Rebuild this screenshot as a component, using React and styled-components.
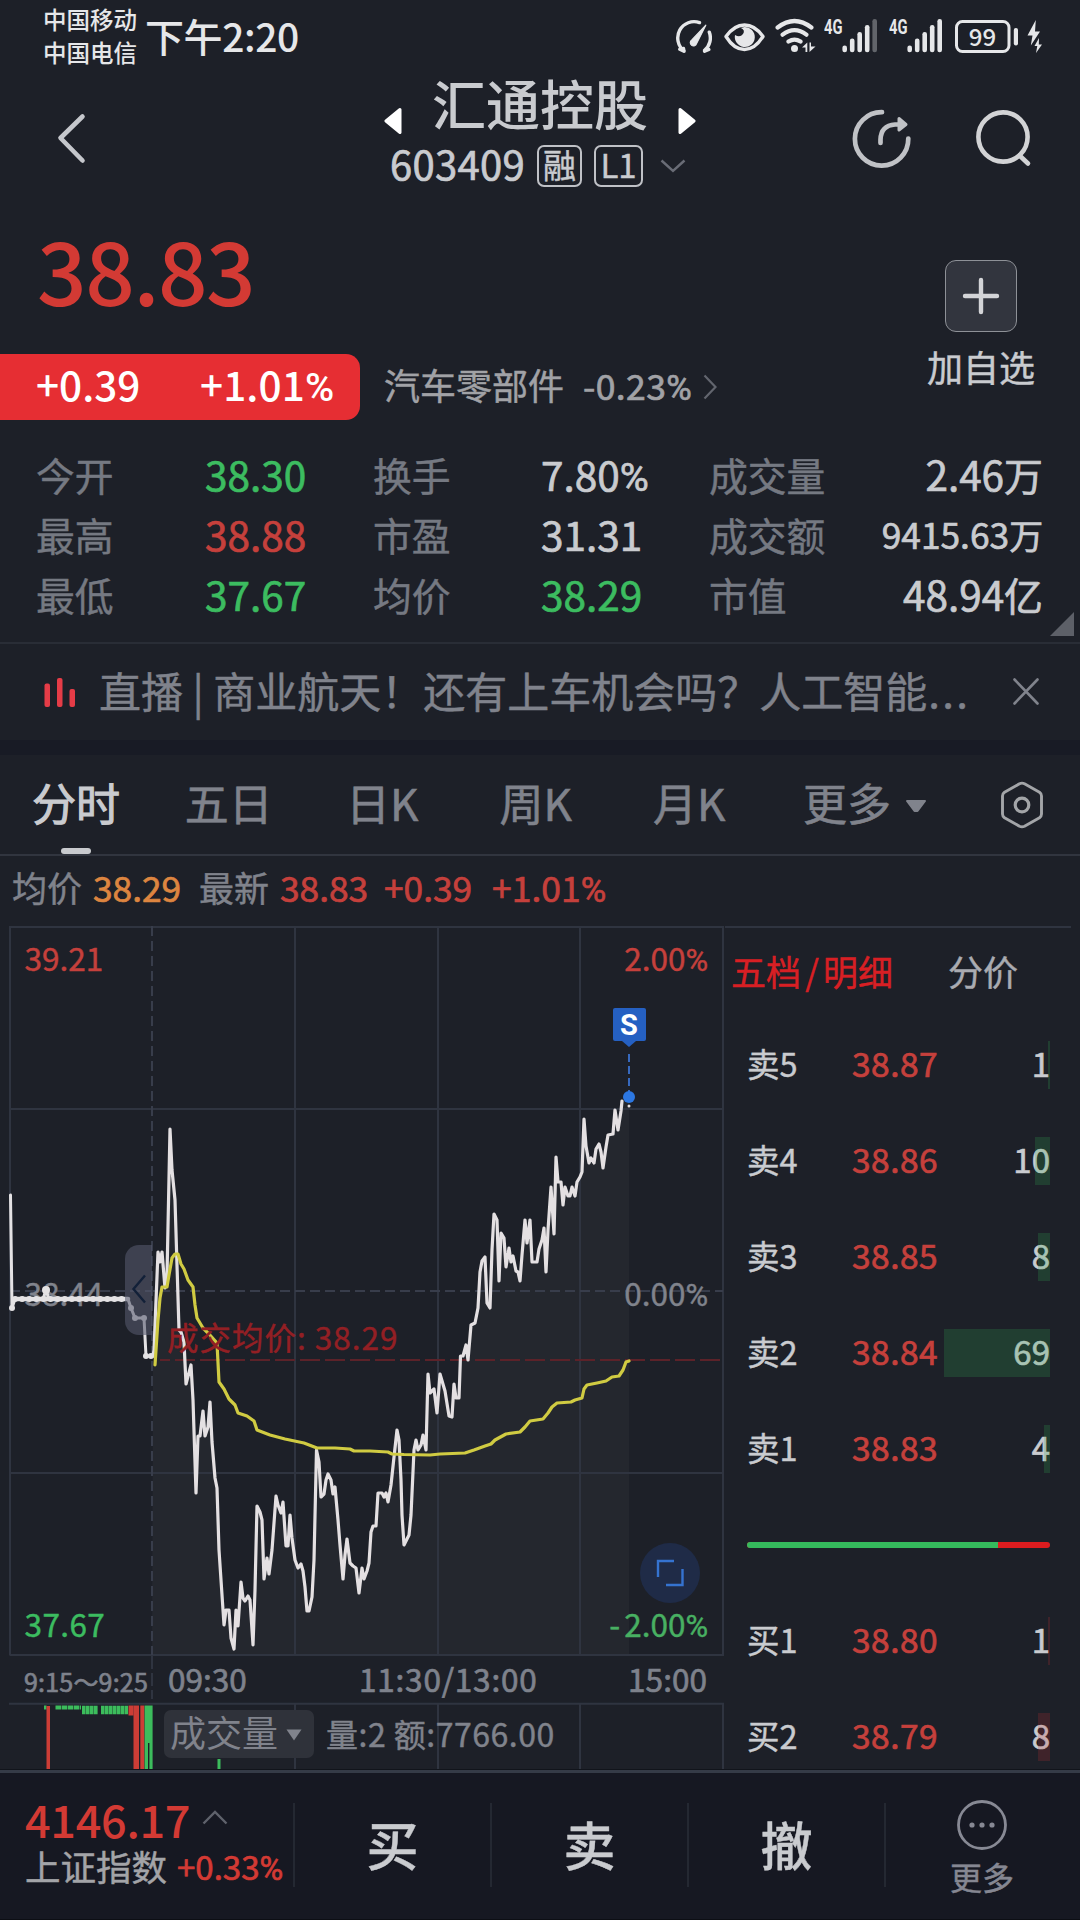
import React from "react";
import styled, { createGlobalStyle } from "styled-components";

const c = {
  bg: "#1d2028",
  band: "#181b25",
  text: "#c9cbcf",
  sub: "#80838c",
  label: "#757982",
  red: "#d33a34",
  redSoft: "#c5403c",
  green: "#3cbc60",
  line: "#2f3440",
};

const Global = createGlobalStyle`
  * { box-sizing: border-box; }
  html, body { margin: 0; padding: 0; background: ${c.bg}; }
  body {
    font-family: "Noto Sans CJK SC", "Noto Sans", sans-serif;
    font-weight: 400;
    color: ${c.text};
    -webkit-text-stroke-width: 0.45px;
  }
  svg { display: block; flex: none; }
`;

const Screen = styled.div`
  width: 1080px;
  height: 1920px;
  overflow: hidden;
  display: flex;
  flex-direction: column;
  background: ${c.bg};
`;

/* ---------- numbers ---------- */

const NumText = styled.span`
  font-size: ${(p) => p.$size}px;
  letter-spacing: ${(p) => p.$ls || 0}px;
  color: ${(p) => p.$color || "inherit"};
  font-weight: ${(p) => p.$weight || 400};
  -webkit-text-stroke-width: ${(p) => (p.$weight ? 0 : 0.7)}px;
  white-space: nowrap;
`;
const Percent = styled.span`
  font-family: Roboto, sans-serif;
  font-size: 0.98em;
`;
const Unit = styled.span`
  font-size: 0.96em;
`;

function Num({ children, size, ls, color, weight }) {
  const parts = String(children).split(/([%万亿])/).filter(Boolean);
  return (
    <NumText $size={size} $ls={ls} $color={color} $weight={weight}>
      {parts.map((s, i) =>
        s === "%" ? <Percent key={i}>%</Percent> : /[万亿]/.test(s) ? <Unit key={i}>{s}</Unit> : s
      )}
    </NumText>
  );
}

/* ---------- status bar ---------- */

const StatusBar = styled.div`
  height: 72px;
  flex: none;
  display: flex;
  padding: 0 37px 0 43px;
  color: #e6e7e9;
  -webkit-text-stroke-width: 0;
`;
const Carriers = styled.div`
  padding-top: 3px;
  font-size: 23.5px;
  line-height: 33px;
  width: 102px;
  white-space: nowrap;
  font-weight: 500;
`;
const Clock = styled.div`
  font-size: 39px;
  line-height: 71px;
  letter-spacing: -0.4px;
  font-weight: 500;
  white-space: nowrap;
`;
const StatusIcons = styled.div`
  margin-left: auto;
  display: flex;
`;
const IconSlot = styled.div`
  margin-left: ${(p) => p.$gap}px;
`;

const ink = "#e6e7e9";

const GaugeIcon = () => (
  <svg width="36" height="72" viewBox="676 0 36 72" fill="none" stroke={ink} strokeWidth="3.4" strokeLinecap="round">
    <path d="M699.5 22.6 A16.300 16.300 0 0 0 684 50.800 M679.800 49.300 L684 51.300 M684 51.300 L683.500 48.500" />
    <path d="M709.300 32.200 A16.300 16.300 0 0 1 704.600 50.400 M708.800 49.500 L704.600 51.300" />
    <path d="M705.8 25.2 L696.6 43.4 A3.2 3.2 0 1 1 691.8 40 Z" fill={ink} strokeWidth="1.2" strokeLinejoin="round" />
  </svg>
);
const EyeIcon = () => (
  <svg width="41" height="72" viewBox="724 0 41 72">
    <path d="M726 36.5 Q734 25 744.5 25 Q755 25 763 36.5 Q755 49.500 744.5 49.500 Q734 49.500 726 36.5Z" fill="none" stroke={ink} strokeWidth="3.4" strokeLinejoin="round" />
    <path d="M744.5 27 A10 10 0 1 1 735 35 Q740 38 743 34 Q745.500 30 741 28 Z" fill={ink} />
  </svg>
);
const WifiIcon = () => (
  <svg width="42" height="72" viewBox="775 0 42 72" fill="none" stroke={ink} strokeWidth="4.2" strokeLinecap="round">
    <path d="M777.600 27.500 Q794.500 14.500 811.400 27.500 M782.600 34.700 Q794.500 25.500 806.400 34.700 M788.500 41.600 Q794.500 37.500 800.500 41.600" />
    <circle cx="794.500" cy="48.500" r="3.500" fill={ink} stroke="none" />
    <path d="M802 47.500 L807.300 42.500 V52 H805.500 V47.500Z M815.500 46.500 L809.500 52 V42.500 H811 V46.500Z" fill={ink} stroke="none" />
  </svg>
);
function SignalIcon({ full }) {
  const tops = [45.5, 38.5, 32, 25, 19];
  return (
    <svg width="54" height="72" viewBox="0 0 54 72">
      <text x="0" y="33.500" fontSize="19.500" fontWeight="700" fontFamily="Roboto, sans-serif" fill={ink} textLength="18.500" lengthAdjust="spacingAndGlyphs">
        4G
      </text>
      {tops.map((t, i) => (
        <rect key={t} x={18.4 + i * 7.5} y={t} width="4.6" height={52.3 - t} rx="2.200" fill={ink} opacity={i === 4 && !full ? 0.35 : 1} />
      ))}
    </svg>
  );
}
const BatteryIcon = () => (
  <svg width="64" height="72" viewBox="955 0 64 72">
    <rect x="956.500" y="21.500" width="52.500" height="30" rx="6" fill="none" stroke={ink} strokeWidth="3" />
    <rect x="1013.800" y="28" width="4.200" height="17.500" rx="2" fill={ink} />
    <text x="982.500" y="45.500" textAnchor="middle" fontSize="24" fontWeight="500" fontFamily="Noto Sans CJK SC, sans-serif" fill={ink}>
      99
    </text>
  </svg>
);
const BoltIcon = () => (
  <svg width="16" height="72" viewBox="1027 0 16 72" fill={ink}>
    <path d="M1035.800 20 L1027.500 35.500 H1032.500 L1030.800 45.500 L1040 31.500 H1035 Z" />
    <path d="M1039 38 L1034.500 46 H1037.300 L1036 53 L1042 44.500 H1038.800 Z" />
  </svg>
);

/* ---------- header ---------- */

const Header = styled.header`
  height: 134px;
  flex: none;
  display: flex;
  align-items: flex-start;
  padding: 0 44px 0 56px;
`;
const TitleBlock = styled.div`
  width: 312px;
  margin-left: 296px;
`;
const TitleRow = styled.div`
  height: 72px;
  display: flex;
  justify-content: space-between;
  align-items: flex-start;
  svg { margin-top: 35px; }
`;
const Title = styled.h1`
  margin: 0;
  font-size: 54px;
  line-height: 62px;
  font-weight: 500;
  white-space: nowrap;
  -webkit-text-stroke-width: 0;
`;
const CodeRow = styled.div`
  height: 43px;
  display: flex;
  align-items: center;
  padding-left: 6px;
  > span { line-height: 43px; margin-top: -5px; width: 147px; flex: none; }
`;
const Badge = styled.div`
  width: ${(p) => p.$w}px;
  flex: none;
  height: 42px;
  border: 2px solid #bfc1c6;
  border-radius: 7px;
  margin-right: ${(p) => p.$gap}px;
  font-size: ${(p) => p.$size}px;
  line-height: 34px;
  text-align: center;
`;
const HeaderIcon = styled.div`
  margin-left: ${(p) => p.$gap}px;
  margin-top: ${(p) => p.$top}px;
`;

/* ---------- quote ---------- */

const Quote = styled.section`
  position: relative;
  height: 436px;
  flex: none;
`;
const QuoteTop = styled.div`
  display: flex;
  height: 214px;
`;
const QuoteMain = styled.div`
  flex: 1;
`;
const Price = styled.div`
  margin: 14px 0 38px 37px;
  height: 96px;
  line-height: 96px;
`;
const ChangeRow = styled.div`
  display: flex;
  height: 66px;
`;
const ChangeBadge = styled.div`
  width: 360px;
  height: 66px;
  padding-left: 36px;
  display: flex;
  border-radius: 0 14px 14px 0;
  background: #e62e33;
  color: #fff;
  line-height: 60px;
  > span:first-child { width: 164px; }
`;
const Sector = styled.div`
  margin-left: 24px;
  display: flex;
  color: #a1a2a6;
  font-size: 36px;
  line-height: 61px;
  svg { margin: 20px 0 0 11px; }
`;
const SectorName = styled.span`
  margin-right: 19px;
`;
const AddBlock = styled.div`
  width: 110px;
  margin-right: 44px;
  display: flex;
  flex-direction: column;
  align-items: center;
`;
const AddButton = styled.div`
  width: 72px;
  height: 72px;
  margin-top: 54px;
  border: 1.5px solid #8e9197;
  border-radius: 11px;
  background: #32353e;
  display: flex;
  align-items: center;
  justify-content: center;
`;
const AddLabel = styled.div`
  margin-top: 14px;
  font-size: 36px;
  line-height: 41px;
  white-space: nowrap;
`;
const Stats = styled.div`
  display: grid;
  grid-template-columns: 169px 168px 168px 168px 334px;
  grid-auto-rows: 60px;
  padding: 24px 0 0 36px;
  line-height: 60px;
`;
const StatLabel = styled.div`
  font-size: 38.8px;
  color: ${c.label};
  white-space: nowrap;
`;
const StatValue = styled.div``;
const StatPair = styled.div`
  display: flex;
  justify-content: space-between;
`;
const Corner = styled.div`
  position: absolute;
  right: 6px;
  bottom: 6px;
  width: 24px;
  height: 24px;
  background: #5d6068;
  clip-path: polygon(100% 0, 100% 100%, 0 100%);
`;

/* ---------- news ---------- */

const News = styled.div`
  height: 98px;
  flex: none;
  border-top: 2px solid #292d36;
  display: flex;
  align-items: flex-start;
  padding-left: 44px;
  color: ${c.sub};
  > svg { margin-top: 34px; }
`;
const NewsText = styled.div`
  margin-left: 23px;
  width: 914px;
  font-size: 42px;
  line-height: 92px;
  white-space: pre;
`;
const Dots = styled.span`
  letter-spacing: 2.400px;
  margin-left: 1px;
`;
const Band = styled.div`
  height: 15px;
  flex: none;
  background: ${c.band};
`;

/* ---------- tabs ---------- */

const Tabs = styled.nav`
  height: 101px;
  flex: none;
  border-bottom: 2px solid #31353f;
  display: flex;
`;
const Tab = styled.div`
  width: ${(p) => (p.$active ? 152 : 153.5)}px;
  display: flex;
  flex-direction: column;
  align-items: center;
  font-size: 44px;
  line-height: 93px;
  height: 99px;
  padding-top: 1px;
  -webkit-text-stroke-width: ${(p) => (p.$active ? 1.1 : 0.6)}px;
  color: ${(p) => (p.$active ? c.text : c.sub)};
`;
const Underline = styled.div`
  width: 30px;
  height: 6px;
  margin-top: -1px;
  border-radius: 3px;
  background: #c8cace;
`;
const MoreTab = styled.div`
  width: 195px;
  padding: 1px 0 0 37px;
  display: flex;
  font-size: 44px;
  line-height: 93px;
  color: ${c.sub};
  -webkit-text-stroke-width: 0.6px;
  svg { margin: 43px 0 0 14px; }
`;
const Settings = styled.div`
  margin: 26px 0 0 39px;
`;

const Info = styled.div`
  height: 70px;
  flex: none;
  display: flex;
  padding-left: 12px;
  font-size: 35px;
  line-height: 61px;
  color: ${c.sub};
`;
const InfoCell = styled.div`
  width: ${(p) => p.$w}px;
  white-space: nowrap;
`;

/* ---------- chart ---------- */

const Main = styled.main`
  height: 843px;
  flex: none;
  display: flex;
`;
const ChartColumn = styled.div`
  width: 725px;
  display: flex;
  flex-direction: column;
`;
const Plot = styled.div`
  position: relative;
  height: 730px;
`;
const Tag = styled.div`
  position: absolute;
  top: ${(p) => p.$top}px;
  ${(p) => (p.$right ? `right: ${p.$right}px;` : `left: ${p.$left}px;`)}
  line-height: 40px;
  font-size: 31.500px;
  letter-spacing: ${(p) => p.$ls || 0}px;
  color: ${(p) => p.$color};
  white-space: nowrap;
`;
const Minus = styled.span`
  margin-right: 4px;
`;
const SellFlag = styled.div`
  position: absolute;
  left: 612.500px;
  top: 82px;
  width: 33px;
  height: 33px;
  border-radius: 2px;
  background: #2560c2;
  color: #fff;
  font: 700 29px/34px Roboto, sans-serif;
  text-align: center;
  -webkit-text-stroke-width: 0;
`;
const TimeAxis = styled.div`
  height: 47px;
  display: flex;
  line-height: 45px;
  color: #7e828c;
  padding-left: 24px;
`;
const TimeCell = styled.div`
  width: ${(p) => p.$w}px;
  white-space: nowrap;
  padding-top: ${(p) => p.$pt || 0}px;
`;
const Volume = styled.div`
  position: relative;
  flex: 1;
`;
const VolumeLegend = styled.div`
  position: absolute;
  left: 164px;
  top: 7px;
  display: flex;
  color: ${c.sub};
`;
const VolumePicker = styled.div`
  width: 150px;
  height: 48px;
  border-radius: 7px;
  background: #2f323a;
  padding-left: 6px;
  display: flex;
  font-size: 36px;
  line-height: 43px;
  -webkit-text-stroke-width: 0;
  svg { margin: 19px 0 0 8px; }
`;
const VolumeText = styled.div`
  margin-left: 12px;
  font-size: 32px;
  letter-spacing: 0.5px;
  line-height: 47px;
  white-space: pre;
`;

const priceLine = [
  [153, 1356], [154, 1350], [158, 1252], [160, 1262], [162, 1252], [165, 1288], [167, 1275], [170, 1129],
  [172, 1170], [175, 1200], [179, 1330], [181, 1332], [184, 1342], [186, 1384], [191, 1365], [193, 1400],
  [196, 1493], [198, 1436], [200, 1436], [203, 1411], [205, 1436], [208, 1427], [210, 1402], [212, 1442],
  [215, 1478], [217, 1488], [219, 1550], [222, 1595], [224, 1625], [226, 1610], [229, 1610], [231, 1638],
  [234, 1649], [236, 1610], [238, 1626], [241, 1582], [243, 1598], [245, 1601], [248, 1596], [250, 1600],
  [253, 1645], [255, 1590], [257, 1506], [260, 1512], [262, 1520], [264, 1579], [267, 1558], [269, 1574],
  [272, 1550], [274, 1523], [276, 1496], [278, 1505], [281, 1513], [283, 1502], [286, 1546], [288, 1546],
  [290, 1515], [292, 1538], [295, 1560], [298, 1568], [301, 1564], [303, 1571], [305, 1587], [307, 1611],
  [309, 1611], [312, 1597], [314, 1560], [316.500, 1450], [319, 1462], [321, 1497], [324, 1494], [326, 1480],
  [328, 1474], [331, 1480], [333, 1494], [335, 1487], [338, 1520], [340, 1545], [343, 1579], [345, 1555],
  [347, 1539], [350, 1563], [353, 1566], [356, 1568], [359, 1593], [362, 1568], [364, 1579], [367, 1571],
  [369, 1563], [371, 1532], [373, 1526], [376, 1526], [378, 1493], [382, 1493], [384, 1497], [386, 1493],
  [388, 1502], [391, 1485], [394, 1457], [397, 1430], [399, 1440], [401, 1480], [402, 1515], [404, 1545],
  [409, 1535], [411, 1515], [414, 1450], [416, 1440], [418, 1450], [421, 1445], [423, 1435], [426, 1450],
  [428, 1374], [430, 1393], [434, 1389], [437, 1413], [440, 1374], [445, 1391], [449, 1416], [452, 1417],
  [454, 1384], [456, 1398], [459, 1398], [460.500, 1356], [463, 1356], [466, 1345], [468, 1360], [471, 1325],
  [475, 1323], [478, 1308], [480, 1272], [482, 1261], [485, 1257], [487, 1303], [490, 1308], [492, 1250],
  [494, 1214], [497, 1220], [499, 1281], [501, 1233], [504, 1238], [506, 1267], [509, 1248], [511, 1262],
  [513, 1256], [516, 1271], [518, 1272], [520, 1281], [522, 1255], [525, 1220], [527, 1243], [530, 1220],
  [532, 1262], [537, 1262], [539, 1249], [542, 1240], [544, 1228], [546, 1272], [548, 1230], [551, 1187],
  [554, 1234], [556, 1157], [558, 1182], [561, 1182], [563, 1205], [565, 1187], [568, 1196], [570, 1196],
  [572, 1187], [575, 1196], [577, 1182], [580, 1177], [582, 1172], [584, 1119], [586, 1146], [589, 1163],
  [591, 1158], [594, 1163], [596, 1149], [599, 1144], [601, 1152], [603, 1168], [606, 1147], [608, 1135],
  [613, 1134], [615, 1110], [618, 1130], [621, 1111], [622, 1101],
];
const avgLine = [
  [155, 1365], [158, 1320], [160, 1298], [162, 1287], [167, 1287], [169, 1275], [172, 1258], [175, 1254],
  [178, 1254], [181, 1264], [184, 1269], [188, 1280], [193, 1287], [195, 1305], [197, 1318], [203, 1328],
  [209, 1334], [217, 1343], [219, 1382], [224, 1389], [229, 1399], [235, 1405], [238, 1413], [247, 1416],
  [254, 1421], [257, 1430], [270, 1435], [285, 1439], [304, 1443], [317, 1448], [335, 1448], [350, 1449],
  [354, 1451], [370, 1451], [388, 1452], [392, 1454], [404, 1454.500], [430, 1455], [440, 1454], [465, 1453],
  [474, 1450], [485, 1446], [491, 1444], [495, 1440], [506, 1434], [520, 1432], [525, 1427], [530, 1421],
  [543, 1419], [548, 1413], [552, 1407], [557, 1403], [571, 1402], [575, 1400], [582, 1398], [584, 1389],
  [587, 1385], [597, 1383], [606, 1381], [612, 1377], [619, 1376], [623, 1370], [626, 1362], [629, 1361],
];
const auctionTail = [[128, 1299], [131, 1308], [135, 1318], [144, 1318], [146, 1356], [153, 1356]];
const toPoints = (pts) => pts.map((p) => p.join(",")).join(" ");

function PriceChart() {
  return (
    <svg width="725" height="730" viewBox="0 926 725 730" fill="none">
      <polygon points={`152,1654 ${toPoints(priceLine)} 629,1101 629,1654`} fill="#fff" fillOpacity="0.032" />
      <g stroke={c.line} strokeWidth="2">
        <path d="M9.500 927 H724 M10 926 V1655 M723 926 V1655 M9.500 1655 H724" />
        <path d="M10 1109 H723 M10 1473 H723 M295 926 V1655 M438 926 V1655 M580 926 V1655" />
      </g>
      <g stroke="#383d4b" strokeWidth="2" strokeDasharray="10 5">
        <path d="M10 1291 H723" />
        <path d="M152 926 V1655" />
      </g>
      <path d="M160 1360 H720" stroke="#5c2229" strokeWidth="1.800" strokeDasharray="20 5" strokeDashoffset="10" />
    </svg>
  );
}

const LineLayer = styled.div`
  position: absolute;
  inset: 0;
`;

function PriceLines() {
  return (
    <svg width="725" height="730" viewBox="0 926 725 730" fill="none" strokeLinejoin="round" strokeLinecap="round">
      <path d="M10.500 1195 L12 1308 L15 1299" stroke="#e4e2e4" strokeWidth="3" />
      <path d="M15 1299 H128" stroke="#e4e2e4" strokeWidth="4.600" />
      <path d="M15 1299 H128" stroke="#e4e2e4" strokeWidth="6" strokeDasharray="0.100 7" />
      <path d="M43 1299 L46 1290 L49 1299" stroke="#e4e2e4" strokeWidth="3" />
      <polyline points={toPoints(auctionTail)} stroke="#e4e2e4" strokeWidth="3" />
      {[[12, 1308], [46, 1290], [131, 1308], [135, 1318], [144, 1318], [146, 1356], [151, 1356]].map(([x, y]) => (
        <circle key={x} cx={x} cy={y} r={x === 46 ? 4 : 3} fill="#e4e2e4" />
      ))}
      <polyline points={toPoints(priceLine)} stroke="#e4e0e2" strokeWidth="3.200" />
      <polyline points={toPoints(avgLine)} stroke="#d0cb42" strokeWidth="3.200" />
      <circle cx="629" cy="1106" r="1.500" fill="#e4e0e2" />
      <path d="M629 1054 V1092" stroke="#3769be" strokeWidth="2" strokeDasharray="8 4" strokeLinecap="butt" />
      <path d="M622 1041 H636 L629 1047 Z" fill="#2560c2" />
      <circle cx="629" cy="1097" r="6" fill="#2c77e2" />
      <path d="M152 1245 H139 A14 14 0 0 0 125 1259 V1321 A14 14 0 0 0 139 1335 H152 Z" fill="#565a6e" fillOpacity="0.58" />
      <path d="M145 1275.500 L133.500 1289 L145 1302.500" stroke="#122038" strokeWidth="2.400" strokeLinecap="butt" strokeLinejoin="miter" />
      <circle cx="670" cy="1573" r="30" fill="#1f2b47" />
      <path d="M658 1577 V1561 H674 M682.500 1569 V1585 H666" stroke="#3573d0" strokeWidth="2.400" strokeLinecap="butt" strokeLinejoin="miter" />
    </svg>
  );
}

function VolumeChart() {
  const r = "#cc3d36";
  const g = "#3cbc5c";
  return (
    <svg width="725" height="113" viewBox="0 1656 725 113" fill="none">
      <g stroke={c.line} strokeWidth="2">
        <path d="M9 1703.700 H724 M295 1704 V1769 M438 1704 V1769 M580 1704 V1769 M723 1704 V1769" />
        <path d="M152 1656 V1699" strokeDasharray="13 4" />
      </g>
      <rect x="44" y="1705.500" width="2.500" height="4" fill={g} />
      <rect x="46.500" y="1706" width="3.500" height="63" fill={r} />
      <path d="M55.500 1707.500 H81" stroke={g} strokeWidth="4" strokeDasharray="5.500 0.600" />
      <path d="M82 1710 H98 M101 1710 H128" stroke={g} strokeWidth="8.500" strokeDasharray="3.600 0.400" />
      <rect x="128.500" y="1705.500" width="5" height="10" fill={r} />
      <rect x="133.500" y="1705.500" width="5.500" height="64" fill={r} />
      <rect x="140.300" y="1705.500" width="4" height="64" fill={r} />
      <rect x="144.600" y="1705.500" width="8" height="64" fill={g} />
      <rect x="148" y="1743" width="1.400" height="26" fill={c.bg} />
      <rect x="217.500" y="1759" width="3" height="10" fill={g} />
    </svg>
  );
}
const VolumeLayer = styled.div`
  position: absolute;
  left: 0;
  top: -47px;
`;

/* ---------- order book ---------- */

const Book = styled.aside`
  width: 346px;
  border-top: 2px solid ${c.line};
  height: 100%;
  overflow: hidden;
`;
const BookTabs = styled.div`
  display: flex;
  height: 88px;
  padding: 0 0 0 6px;
  font-size: 35px;
  line-height: 85px;
  color: #a9abb1;
`;
const BookTab = styled.div`
  width: ${(p) => p.$w}px;
  color: ${(p) => (p.$active ? "#d81f24" : "inherit")};
  white-space: nowrap;
`;
const Slash = styled.span`
  display: inline-block;
  width: 22px;
  text-align: center;
`;
const BookRow = styled.div`
  position: relative;
  height: 96px;
  width: 303px;
  margin-left: 22px;
  display: flex;
  line-height: 93px;
  font-size: 32.500px;
`;
const Side = styled.div`
  width: 105px;
`;
const Qty = styled.div`
  margin-left: auto;
`;
const QtyBar = styled.div`
  position: absolute;
  right: 0;
  top: 25px;
  height: 48px;
  background: ${(p) => (p.$sell ? "rgba(48, 170, 80, 0.22)" : "rgba(200, 50, 50, 0.2)")};
`;
const RatioRow = styled.div`
  height: 96px;
  padding: 46px 0 0 21.500px;
`;
const Ratio = styled.div`
  display: flex;
  width: 303px;
  height: 6px;
  border-radius: 3px;
  overflow: hidden;
  background: #dc1c1f;
`;
const RatioSell = styled.div`
  width: 251px;
  background: #35ba5d;
`;

const sells = [
  ["卖5", "38.87", 1],
  ["卖4", "38.86", 10],
  ["卖3", "38.85", 8],
  ["卖2", "38.84", 69],
  ["卖1", "38.83", 4],
];
const buys = [
  ["买1", "38.80", 1],
  ["买2", "38.79", 8],
];

function Level({ row, sell }) {
  const [name, price, qty] = row;
  return (
    <BookRow>
      <Side>{name}</Side>
      <Num size={33.5} ls={0.5} color={c.redSoft}>{price}</Num>
      <Qty>
        <Num size={33}>{qty}</Num>
      </Qty>
      <QtyBar $sell={sell} style={{ width: Math.max(2, qty * 1.535) }} />
    </BookRow>
  );
}

/* ---------- bottom bar ---------- */

const BottomBar = styled.footer`
  height: 151px;
  flex: none;
  border-top: 1px solid #11141b;
  border-bottom: 1px solid #0c0e14;
  background: #161822;
  box-shadow: inset 0 3px 0 #353b47;
  display: flex;
`;
const IndexBox = styled.div`
  width: 293px;
  padding: 21px 0 0 25px;
  color: ${c.red};
`;
const IndexTop = styled.div`
  display: flex;
  height: 55px;
  line-height: 55px;
  svg { margin: 19px 0 0 12px; }
`;
const IndexBottom = styled.div`
  display: flex;
  height: 40px;
  line-height: 40px;
`;
const IndexName = styled.span`
  font-size: 35.500px;
  color: #a3a4a8;
  margin-right: 10px;
`;
const TradeButton = styled.div`
  width: 197px;
  height: 84px;
  margin-top: 33px;
  border-left: 2px solid #242832;
  text-align: center;
  font-size: 52px;
  line-height: 81px;
  font-weight: 500;
`;
const MoreButton = styled(TradeButton)`
  width: 194px;
  display: flex;
  flex-direction: column;
  align-items: center;
  font-size: 32px;
  line-height: 40px;
  font-weight: 400;
  color: #858792;
  svg { margin-top: -4px; }
`;
const MoreLabel = styled.span`
  margin-top: 5px;
`;

export default function App() {
  return (
    <>
      <Global />
      <Screen>
        <StatusBar>
          <Carriers>
            <div>中国移动</div>
            <div>中国电信</div>
          </Carriers>
          <Clock>下午2:20</Clock>
          <StatusIcons>
            <GaugeIcon />
            <IconSlot $gap={12}><EyeIcon /></IconSlot>
            <IconSlot $gap={10}><WifiIcon /></IconSlot>
            <IconSlot $gap={7}><SignalIcon /></IconSlot>
            <IconSlot $gap={11}><SignalIcon full /></IconSlot>
            <IconSlot $gap={12}><BatteryIcon /></IconSlot>
            <IconSlot $gap={8}><BoltIcon /></IconSlot>
          </StatusIcons>
        </StatusBar>

        <Header>
          <svg width="32" height="134" viewBox="56 72 32 134" fill="none" stroke="#c5c7cc" strokeWidth="4.600" strokeLinecap="round" strokeLinejoin="round">
            <path d="M82.500 116.500 L60.500 138 L82.500 160.500" />
          </svg>
          <TitleBlock>
            <TitleRow>
              <svg width="18" height="28" viewBox="0 0 18 28">
                <path d="M16 2.500 L2 14 L16 25.500 Z" fill="#fff" stroke="#fff" strokeWidth="3" strokeLinejoin="round" />
              </svg>
              <Title>汇通控股</Title>
              <svg width="18" height="28" viewBox="0 0 18 28">
                <path d="M2 2.500 L16 14 L2 25.500 Z" fill="#fff" stroke="#fff" strokeWidth="3" strokeLinejoin="round" />
              </svg>
            </TitleRow>
            <CodeRow>
              <Num size={40} ls={0.3}>603409</Num>
              <Badge $w={45} $gap={12} $size={33}>融</Badge>
              <Badge $w={49} $gap={17} $size={33}>L1</Badge>
              <svg width="26" height="14" viewBox="0 0 26 14" fill="none" stroke="#696c76" strokeWidth="2.400">
                <path d="M1.500 1.500 L13 12 L24.500 1.500" />
              </svg>
            </CodeRow>
          </TitleBlock>
          <HeaderIcon $gap={156} $top={36}>
            <svg width="60" height="62" viewBox="852 108 60 62" fill="none" stroke="#c0c2c6" strokeWidth="4.700" strokeLinecap="round">
              <path d="M882 112.200 A26.700 26.700 0 1 0 908.300 138.500" />
              <path d="M880.500 143 V139.500 Q881 125.500 895 124.500 H901" />
              <path d="M899 118.500 L906 124.500 L899 130 Z" fill="#c0c2c6" strokeWidth="3" strokeLinejoin="round" />
            </svg>
          </HeaderIcon>
          <HeaderIcon $gap={62} $top={34}>
            <svg width="60" height="62" viewBox="974 106 60 62" fill="none" stroke="#d2d3d5" strokeWidth="4.600" strokeLinecap="round">
              <circle cx="1003" cy="137" r="24.600" />
              <path d="M1019.500 155.500 L1028 163.500" />
            </svg>
          </HeaderIcon>
        </Header>

        <Quote>
          <QuoteTop>
            <QuoteMain>
              <Price>
                <Num size={87} color={c.red} weight={500} ls={-1.4}>38.83</Num>
              </Price>
              <ChangeRow>
                <ChangeBadge>
                  <Num size={40.5} weight={500}>+0.39</Num>
                  <Num size={40.5} weight={500} ls={0.1}>+1.01%</Num>
                </ChangeBadge>
                <Sector>
                  <SectorName>汽车零部件</SectorName>
                  <Num size={35.5} ls={0.4}>-0.23%</Num>
                  <svg width="14" height="26" viewBox="0 0 14 26" fill="none" stroke="#62656e" strokeWidth="2.200">
                    <path d="M1.500 1.500 L12.500 13 L1.500 24.500" />
                  </svg>
                </Sector>
              </ChangeRow>
            </QuoteMain>
            <AddBlock>
              <AddButton>
                <svg width="38" height="38" viewBox="0 0 38 38" stroke="#d3d4d7" strokeWidth="4.400" strokeLinecap="round">
                  <path d="M19 3 V35 M3 19 H35" />
                </svg>
              </AddButton>
              <AddLabel>加自选</AddLabel>
            </AddBlock>
          </QuoteTop>
          <Stats>
            <StatLabel>今开</StatLabel>
            <StatValue><Num size={40.5} color={c.green}>38.30</Num></StatValue>
            <StatLabel>换手</StatLabel>
            <StatValue><Num size={40.5}>7.80%</Num></StatValue>
            <StatPair>
              <StatLabel>成交量</StatLabel>
              <Num size={40.5}>2.46万</Num>
            </StatPair>
            <StatLabel>最高</StatLabel>
            <StatValue><Num size={40.5} color={c.redSoft}>38.88</Num></StatValue>
            <StatLabel>市盈</StatLabel>
            <StatValue><Num size={40.5}>31.31</Num></StatValue>
            <StatPair>
              <StatLabel>成交额</StatLabel>
              <Num size={35.3}>9415.63万</Num>
            </StatPair>
            <StatLabel>最低</StatLabel>
            <StatValue><Num size={40.5} color={c.green}>37.67</Num></StatValue>
            <StatLabel>均价</StatLabel>
            <StatValue><Num size={40.5} color={c.green}>38.29</Num></StatValue>
            <StatPair>
              <StatLabel>市值</StatLabel>
              <Num size={40.5}>48.94亿</Num>
            </StatPair>
          </Stats>
          <Corner />
        </Quote>

        <News>
          <svg width="32" height="30" viewBox="44 678 32 30" fill="#e53c47">
            <rect x="44.500" y="683.500" width="5.500" height="23.500" rx="2" />
            <rect x="57" y="678" width="5.500" height="29" rx="2" />
            <rect x="69.500" y="689" width="5.500" height="18" rx="2" />
          </svg>
          <NewsText>
            直播 | 商业航天！还有上车机会吗？人工智能<Dots>...</Dots>
          </NewsText>
          <svg width="26" height="27" viewBox="0 0 26 27" stroke={c.sub} strokeWidth="2.600" strokeLinecap="round">
            <path d="M1.500 1.500 L24.500 25.500 M24.500 1.500 L1.500 25.500" />
          </svg>
        </News>
        <Band />

        <Tabs>
          <Tab $active>
            分时
            <Underline />
          </Tab>
          <Tab>五日</Tab>
          <Tab>日K</Tab>
          <Tab>周K</Tab>
          <Tab>月K</Tab>
          <MoreTab>
            更多
            <svg width="22" height="14" viewBox="0 0 22 14" fill={c.sub} stroke={c.sub} strokeWidth="2" strokeLinejoin="round">
              <path d="M2 2 H20 L12.500 12 H9.500 Z" />
            </svg>
          </MoreTab>
          <Settings>
            <svg width="44" height="48" viewBox="0 0 44 48" fill="none" stroke="#a3a5a8" strokeWidth="2.900" strokeLinejoin="round">
              <path d="M19.500 2.700 Q22 1.500 24.500 2.700 L39.500 11.300 Q41.500 12.700 41.500 15 V33 Q41.500 35.300 39.500 36.700 L24.500 45.300 Q22 46.500 19.500 45.300 L4.500 36.700 Q2.500 35.300 2.500 33 V15 Q2.500 12.700 4.500 11.300 Z" />
              <circle cx="22" cy="24" r="6.800" strokeWidth="3.200" />
            </svg>
          </Settings>
        </Tabs>

        <Info>
          <InfoCell $w={81}>均价</InfoCell>
          <InfoCell $w={106}><Num size={35.3} color="#dd8540">38.29</Num></InfoCell>
          <InfoCell $w={81}>最新</InfoCell>
          <InfoCell $w={104}><Num size={35.3} color={c.redSoft}>38.83</Num></InfoCell>
          <InfoCell $w={108}><Num size={35.3} color={c.redSoft}>+0.39</Num></InfoCell>
          <InfoCell><Num size={35.5} color={c.redSoft}>+1.01%</Num></InfoCell>
        </Info>

        <Main>
          <ChartColumn>
            <Plot>
              <PriceChart />
              <Tag $left={24.5} $top={10.5} $color={c.redSoft}>39.21</Tag>
              <Tag $right={17} $top={10.5} $color={c.redSoft}>2.00<Percent>%</Percent></Tag>
              <Tag $left={24.5} $top={346} $color={c.sub}>38.44</Tag>
              <Tag $right={17} $top={346} $color={c.sub}>0.00<Percent>%</Percent></Tag>
              <Tag $left={24.5} $top={677} $ls={0.4} $color={c.green}>37.67</Tag>
              <Tag $right={17} $top={677} $color="#48b062"><Minus>-</Minus>2.00<Percent>%</Percent></Tag>
              <LineLayer><PriceLines /></LineLayer>
              <Tag $left={167} $top={389.500} $ls={1} $color="#931f24">成交均价: 38.29</Tag>
              <SellFlag>S</SellFlag>
            </Plot>
            <TimeAxis>
              <TimeCell $w={144} $pt={3}><Num size={25} ls={0.2}>9:15～9:25</Num></TimeCell>
              <TimeCell $w={191}><Num size={31.5}>09:30</Num></TimeCell>
              <TimeCell $w={269}><Num size={31.5} ls={0.8}>11:30/13:00</Num></TimeCell>
              <TimeCell $w={90}><Num size={31.5} ls={0.1}>15:00</Num></TimeCell>
            </TimeAxis>
            <Volume>
              <VolumeLayer><VolumeChart /></VolumeLayer>
              <VolumeLegend>
                <VolumePicker>
                  成交量
                  <svg width="16" height="12" viewBox="0 0 16 12" fill={c.sub}>
                    <path d="M0.500 0.500 H15.500 L8 11.500 Z" />
                  </svg>
                </VolumePicker>
                <VolumeText>量:2 额:7766.00</VolumeText>
              </VolumeLegend>
            </Volume>
          </ChartColumn>

          <Book>
            <BookTabs>
              <BookTab $w={217} $active>五档<Slash>/</Slash>明细</BookTab>
              <BookTab>分价</BookTab>
            </BookTabs>
            {sells.map((row) => <Level key={row[0]} row={row} sell />)}
            <RatioRow>
              <Ratio>
                <RatioSell />
              </Ratio>
            </RatioRow>
            {buys.map((row) => <Level key={row[0]} row={row} />)}
          </Book>
        </Main>

        <BottomBar>
          <IndexBox>
            <IndexTop>
              <Num size={45} weight={500} ls={-0.3}>4146.17</Num>
              <svg width="26" height="15" viewBox="0 0 26 15" fill="none" stroke="#5f626c" strokeWidth="2.400">
                <path d="M1.500 13.500 L13 2 L24.500 13.500" />
              </svg>
            </IndexTop>
            <IndexBottom>
              <IndexName>上证指数</IndexName>
              <Num size={33}>+0.33%</Num>
            </IndexBottom>
          </IndexBox>
          <TradeButton>买</TradeButton>
          <TradeButton>卖</TradeButton>
          <TradeButton>撤</TradeButton>
          <MoreButton>
            <svg width="52" height="52" viewBox="0 0 52 52" fill="none">
              <circle cx="26" cy="26" r="23.500" stroke="#878994" strokeWidth="2.800" />
              <circle cx="16" cy="26" r="2.600" fill="#878994" />
              <circle cx="26" cy="26" r="2.600" fill="#878994" />
              <circle cx="36" cy="26" r="2.600" fill="#878994" />
            </svg>
            <MoreLabel>更多</MoreLabel>
          </MoreButton>
        </BottomBar>
      </Screen>
    </>
  );
}
